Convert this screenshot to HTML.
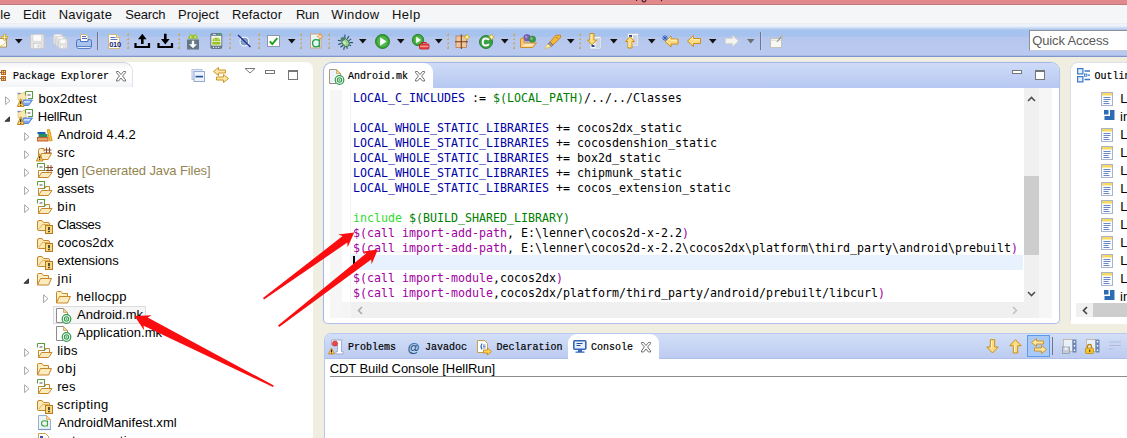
<!DOCTYPE html>
<html><head><meta charset="utf-8"><title>Eclipse</title>
<style>
*{box-sizing:border-box;margin:0;padding:0}
html,body{width:1127px;height:438px;overflow:hidden;background:#f0ede1;}
body{position:relative;font-family:"Liberation Sans",sans-serif;font-size:13px;color:#000;}
.abs{position:absolute}
svg{overflow:visible}
#title{left:0;top:0;width:1127px;height:4px;background:#e2898c}
#titleline{left:0;top:4px;width:1127px;height:1px;background:#c07a7c}
#menu{left:0;top:5px;width:1127px;height:20px;background:#f5f6f7}
.m{top:7px;line-height:15px;white-space:nowrap;color:#111}
#tool{left:0;top:23px;width:1127px;height:33px;background:linear-gradient(#e9eaec 0px,#eef2fb 1px,#edf2fb 3px,#a6c2ee 7px,#a6c2ee 13px,#b6c7ee 14.5px,#bacaef 33px);}
#toolline{left:0;top:55px;width:1127px;height:2px;background:linear-gradient(#a9bae6 0,#a9bae6 50%,#7f95cc 50%,#7f95cc 100%)}
.ss{font-family:"Liberation Mono",monospace;font-size:10px;letter-spacing:0;white-space:nowrap;line-height:14px;color:#000;-webkit-text-stroke:0.18px #000}
.ui{white-space:nowrap;line-height:16px}
#pe{left:-10px;top:62px;width:323px;height:400px;background:#fff;border-radius:0 7px 0 0;}
#ed{left:323px;top:62px;width:737px;height:262px;background:#fff;border:1px solid #a4b8ea;border-right-color:#b2c2ea;border-bottom-color:#b2c2ea;border-radius:9px 9px 5px 5px;overflow:hidden;box-shadow:0 0 1px #c8d4f0}
#edhead{left:0;top:0;width:737px;height:25px;background:linear-gradient(#cfdbf7,#b6c8f1)}
#edtab{left:0;top:0;width:109px;height:26px;background:#fff;border-radius:8px 9px 0 0}
#ol{left:1070px;top:62px;width:80px;height:262px;background:#fff;border-radius:8px 0 0 6px;border:1px solid #dcdfe8;overflow:hidden}
#con{left:324px;top:333px;width:830px;height:120px;background:#fff;border-radius:7px 0 0 0;border-left:1px solid #b6c6ec;border-top:1px solid #b9c8ee;overflow:hidden}
#conhead{left:0;top:0;width:830px;height:25px;background:linear-gradient(#d3dff7,#bccbf0);border-bottom:1px solid #aebfe8}
#contab{left:243px;top:0;width:91px;height:26px;background:#fff;border-radius:9px 9px 0 0}
.tree{white-space:nowrap;line-height:18px;height:18px}
.code{white-space:pre;font-family:"DejaVu Sans Mono","Liberation Mono",monospace;font-size:11.63px;line-height:15px;height:15px;color:#000}
.k{color:#0000a8}.v{color:#008000}.g{color:#30dc30}.p{color:#a000a0}
</style></head><body>
<div id="title" class="abs"></div><div id="titleline" class="abs"></div>
<svg class="abs" style="left:630px;top:0px" width="40" height="4" viewBox="0 0 40 4" ><path d="M6.500 0v1M12 0 Q12.500 2.200 14.500 2 Q15.800 1.500 16 0" fill="none" stroke="#3a2030" stroke-width="1.200"/><path d="M31.500 0v1.200" stroke="#3a2030" stroke-width="1.200"/></svg>
<div id="menu" class="abs"></div>
<div id="m0" class="abs m" style="left:-10.5px;top:7px;">File</div>
<div id="m1" class="abs m" style="left:23.1px;top:7px;letter-spacing:0.018px;">Edit</div>
<div id="m2" class="abs m" style="left:58.69px;top:7px;letter-spacing:0.273px;">Navigate</div>
<div id="m3" class="abs m" style="left:125.37px;top:7px;letter-spacing:-0.227px;">Search</div>
<div id="m4" class="abs m" style="left:178.0px;top:7px;letter-spacing:0.049px;">Project</div>
<div id="m5" class="abs m" style="left:231.9px;top:7px;letter-spacing:0.142px;">Refactor</div>
<div id="m6" class="abs m" style="left:295.9px;top:7px;letter-spacing:-0.300px;">Run</div>
<div id="m7" class="abs m" style="left:331.32px;top:7px;letter-spacing:0.312px;">Window</div>
<div id="m8" class="abs m" style="left:391.9px;top:7px;letter-spacing:0.500px;">Help</div>
<div id="tool" class="abs"></div><div id="toolline" class="abs"></div>
<!--TOOLBAR ICONS-->
<svg class="abs" style="left:0px;top:33px" width="9" height="16" viewBox="0 0 9 16" ><path d="M-1 5.500 H6.500 V14 H-1" fill="#fff" stroke="#b09444" stroke-width="1"/><path d="M6 7.500 Q5.500 11.500 0 13.200" fill="none" stroke="#f2cc4c" stroke-width="1"/><path d="M4.600 0.800 V7.600 M1.200 4.200 H8" stroke="#c8961c" stroke-width="2.400"/><path d="M4.600 1.300 V7.100 M1.700 4.200 H7.500" stroke="#fff8c8" stroke-width="0.900"/></svg>
<svg class="abs" style="left:14.8px;top:39px" width="8" height="5" viewBox="0 0 8 5" ><path d="M0 0 H7.500 L3.750 4.500 Z" fill="#111"/></svg>
<svg class="abs" style="left:30px;top:34px" width="15" height="15" viewBox="0 0 15 15" ><path d="M0.500 0.500 H14 V14.500 H0.500 Z" fill="#e4e4e4" stroke="#c9c9c9"/><rect x="3" y="0.800" width="8.500" height="6.400" fill="#fbfbfb" stroke="#d2d2d2" stroke-width="0.600"/><rect x="3.500" y="9.300" width="7.500" height="5" fill="#f6f6f6" stroke="#c8c8c8" stroke-width="0.700"/><rect x="7.500" y="10.800" width="2" height="2.800" fill="#d6d6d6"/></svg>
<svg class="abs" style="left:53px;top:34px" width="15" height="15" viewBox="0 0 15 15" ><g transform="scale(0.68)"><path d="M0.500 0.500 H14 V14.500 H0.500 Z" fill="#e4e4e4" stroke="#c9c9c9"/><rect x="3" y="0.800" width="8.500" height="6.400" fill="#fbfbfb" stroke="#d2d2d2" stroke-width="0.600"/><rect x="3.500" y="9.300" width="7.500" height="5" fill="#f6f6f6" stroke="#c8c8c8" stroke-width="0.700"/><rect x="7.500" y="10.800" width="2" height="2.800" fill="#d6d6d6"/></g><g transform="translate(2.500,2.300) scale(0.68)"><path d="M0.500 0.500 H14 V14.500 H0.500 Z" fill="#e4e4e4" stroke="#c9c9c9"/><rect x="3" y="0.800" width="8.500" height="6.400" fill="#fbfbfb" stroke="#d2d2d2" stroke-width="0.600"/><rect x="3.500" y="9.300" width="7.500" height="5" fill="#f6f6f6" stroke="#c8c8c8" stroke-width="0.700"/><rect x="7.500" y="10.800" width="2" height="2.800" fill="#d6d6d6"/></g><g transform="translate(5,4.600) scale(0.68)"><path d="M0.500 0.500 H14 V14.500 H0.500 Z" fill="#e4e4e4" stroke="#c9c9c9"/><rect x="3" y="0.800" width="8.500" height="6.400" fill="#fbfbfb" stroke="#d2d2d2" stroke-width="0.600"/><rect x="3.500" y="9.300" width="7.500" height="5" fill="#f6f6f6" stroke="#c8c8c8" stroke-width="0.700"/><rect x="7.500" y="10.800" width="2" height="2.800" fill="#d6d6d6"/></g></svg>
<svg class="abs" style="left:75.5px;top:33.5px" width="16" height="16" viewBox="0 0 16 16" ><path d="M4.500 7 V0.500 H10 L12 2.500 V7" fill="#fff" stroke="#c8b070" stroke-width="0.900"/><path d="M6 2.500h4M6 4.500h5" stroke="#4a6ab0" stroke-width="1"/><path d="M0.500 7.500 Q0.500 5.500 2.500 5.500 H4.500 V7.500 H12 V5.500 H13.500 Q15.500 5.500 15.500 7.500 V12.500 H0.500 Z" fill="#a8c4ee" stroke="#4a74c4"/><path d="M1 12.500 H15 V13.500 Q15 14.500 13 14.500 H3 Q1 14.500 1 13.500Z" fill="#e4ecfa" stroke="#5a80c8"/></svg>
<svg class="abs" style="left:97px;top:32px" width="2" height="18" viewBox="0 0 2 18" ><rect x="0" y="0" width="1" height="18" fill="#6f768e"/><rect x="1" y="0" width="1" height="18" fill="#c6d3f2" opacity="0.6"/></svg>
<svg class="abs" style="left:107.5px;top:33.5px" width="14" height="16" viewBox="0 0 14 16" ><path d="M0.500 0.500 H8.500 L11.500 3.500 V14.500 H0.500 Z" fill="#fff" stroke="#d2b878"/><path d="M8.500 0.500 V3.500 H11.500" fill="#f4e2b0" stroke="#d2b878"/><path d="M2.500 3.500h5M2.500 5.500h7" stroke="#5a78c0" stroke-width="1"/><text x="1.200" y="13.200" font-family="Liberation Sans,sans-serif" font-weight="bold" font-size="7.500" fill="#1a2a7a" letter-spacing="-0.300">010</text></svg>
<svg class="abs" style="left:127px;top:33px" width="3" height="18" viewBox="0 0 3 18" ><rect x="0" y="0.3" width="2" height="2.6" fill="#bba985"/><rect x="0" y="0.3" width="1" height="1" fill="#d8ccb0"/><rect x="0" y="5" width="2" height="2.1" fill="#bba985"/><rect x="0" y="5" width="1" height="1" fill="#d8ccb0"/><rect x="0" y="9.2" width="2" height="2.1" fill="#bba985"/><rect x="0" y="9.2" width="1" height="1" fill="#d8ccb0"/><rect x="0" y="13.4" width="2" height="2.6" fill="#bba985"/><rect x="0" y="13.4" width="1" height="1" fill="#d8ccb0"/></svg>
<svg class="abs" style="left:133.5px;top:33px" width="17" height="16" viewBox="0 0 17 16" ><path d="M1.500 10 V14 H15 V10" fill="none" stroke="#000" stroke-width="2.200"/><path d="M8.300 0.800 L4 6.300 H7 V11 H9.600 V6.300 H12.600 Z" fill="#000"/></svg>
<svg class="abs" style="left:156.8px;top:33px" width="17" height="16" viewBox="0 0 17 16" ><path d="M1.500 10 V14 H15 V10" fill="none" stroke="#000" stroke-width="2.200"/><path d="M8.300 11.400 L4 5.900 H7 V0.800 H9.600 V5.900 H12.600 Z" fill="#000"/></svg>
<svg class="abs" style="left:178px;top:33px" width="3" height="18" viewBox="0 0 3 18" ><rect x="0" y="0.3" width="2" height="2.6" fill="#bba985"/><rect x="0" y="0.3" width="1" height="1" fill="#d8ccb0"/><rect x="0" y="5" width="2" height="2.1" fill="#bba985"/><rect x="0" y="5" width="1" height="1" fill="#d8ccb0"/><rect x="0" y="9.2" width="2" height="2.1" fill="#bba985"/><rect x="0" y="9.2" width="1" height="1" fill="#d8ccb0"/><rect x="0" y="13.4" width="2" height="2.6" fill="#bba985"/><rect x="0" y="13.4" width="1" height="1" fill="#d8ccb0"/></svg>
<svg class="abs" style="left:187px;top:32.5px" width="12" height="17" viewBox="0 0 12 17" ><path d="M1 5.800 Q1 1.800 6 1.800 Q11 1.800 11 5.800 Z" fill="#9ac326"/><path d="M2.500 0.300 L3.800 2.300 M9.500 0.300 L8.200 2.300" stroke="#9ac326" stroke-width="0.900"/><circle cx="3.800" cy="4" r="0.700" fill="#fff"/><circle cx="8.200" cy="4" r="0.700" fill="#fff"/><rect x="0" y="6.500" width="12" height="10" fill="#657684"/><path d="M6 15.300 L2 11.300 H4.800 V7.800 H7.200 V11.300 H10 Z" fill="#fff"/></svg>
<svg class="abs" style="left:209.5px;top:33px" width="13" height="16" viewBox="0 0 13 16" ><rect x="0.300" y="0" width="12" height="16" rx="2" fill="#66788a"/><rect x="1.300" y="2.800" width="10" height="9.800" fill="#f1f5e4"/><path d="M2.300 8.300 Q2.300 4.800 6.300 4.800 Q10.300 4.800 10.300 8.300 Z" fill="#9ac326"/><rect x="2.300" y="9" width="8" height="2.600" fill="#9ac326"/><circle cx="4.600" cy="6.800" r="0.600" fill="#fff"/><circle cx="8" cy="6.800" r="0.600" fill="#fff"/><path d="M2.800 1.400h3" stroke="#e8eef4" stroke-width="0.900"/><circle cx="8.500" cy="1.400" r="0.700" fill="#3ad43a"/><circle cx="10.300" cy="1.400" r="0.700" fill="#3ad43a"/><path d="M3 14.400h1M5.500 14.400h1.200M8 14.400h1.200" stroke="#fff" stroke-width="1"/></svg>
<svg class="abs" style="left:229px;top:33px" width="3" height="18" viewBox="0 0 3 18" ><rect x="0" y="0.3" width="2" height="2.6" fill="#bba985"/><rect x="0" y="0.3" width="1" height="1" fill="#d8ccb0"/><rect x="0" y="5" width="2" height="2.1" fill="#bba985"/><rect x="0" y="5" width="1" height="1" fill="#d8ccb0"/><rect x="0" y="9.2" width="2" height="2.1" fill="#bba985"/><rect x="0" y="9.2" width="1" height="1" fill="#d8ccb0"/><rect x="0" y="13.4" width="2" height="2.6" fill="#bba985"/><rect x="0" y="13.4" width="1" height="1" fill="#d8ccb0"/></svg>
<svg class="abs" style="left:237px;top:34px" width="15" height="14" viewBox="0 0 15 14" ><circle cx="7.400" cy="7.600" r="4.800" fill="#fff"/><circle cx="7.400" cy="7.600" r="3.500" fill="#86a4c8" stroke="#6888b4" stroke-width="0.800"/><path d="M1 1 L13.500 13" stroke="#1a2a90" stroke-width="1.200"/></svg>
<svg class="abs" style="left:258px;top:33px" width="3" height="18" viewBox="0 0 3 18" ><rect x="0" y="0.3" width="2" height="2.6" fill="#bba985"/><rect x="0" y="0.3" width="1" height="1" fill="#d8ccb0"/><rect x="0" y="5" width="2" height="2.1" fill="#bba985"/><rect x="0" y="5" width="1" height="1" fill="#d8ccb0"/><rect x="0" y="9.2" width="2" height="2.1" fill="#bba985"/><rect x="0" y="9.2" width="1" height="1" fill="#d8ccb0"/><rect x="0" y="13.4" width="2" height="2.6" fill="#bba985"/><rect x="0" y="13.4" width="1" height="1" fill="#d8ccb0"/></svg>
<svg class="abs" style="left:266.5px;top:35px" width="13" height="12" viewBox="0 0 13 12" ><rect x="0.500" y="0.500" width="12" height="11" fill="#fff" stroke="#8e98ac"/><path d="M2.800 6.300 L5.300 9 L10.300 3.200" fill="none" stroke="#18a018" stroke-width="1.900"/></svg>
<svg class="abs" style="left:287.7px;top:39px" width="8" height="5" viewBox="0 0 8 5" ><path d="M0 0 H7.500 L3.750 4.500 Z" fill="#111"/></svg>
<svg class="abs" style="left:300px;top:33px" width="3" height="18" viewBox="0 0 3 18" ><rect x="0" y="0.3" width="2" height="2.6" fill="#bba985"/><rect x="0" y="0.3" width="1" height="1" fill="#d8ccb0"/><rect x="0" y="5" width="2" height="2.1" fill="#bba985"/><rect x="0" y="5" width="1" height="1" fill="#d8ccb0"/><rect x="0" y="9.2" width="2" height="2.1" fill="#bba985"/><rect x="0" y="9.2" width="1" height="1" fill="#d8ccb0"/><rect x="0" y="13.4" width="2" height="2.6" fill="#bba985"/><rect x="0" y="13.4" width="1" height="1" fill="#d8ccb0"/></svg>
<svg class="abs" style="left:310px;top:33px" width="14" height="16" viewBox="0 0 14 16" ><rect x="0.500" y="1" width="10.500" height="14" fill="#e4f6fa" stroke="#cca476"/><path d="M9.300 6.300 V14.200 M9.300 7.800 Q8 6.600 6 6.600 Q2.600 6.600 2.600 10.200 Q2.600 13.800 6 13.800 Q8 13.800 9.300 12.600" fill="none" stroke="#22a040" stroke-width="1.300"/><path d="M10 0 L11.200 2.300 L13.500 3.500 L11.200 4.700 L10 7 L8.800 4.700 L6.500 3.500 L8.800 2.300Z" fill="#f89030"/><path d="M10 2v3M8.500 3.500h3" stroke="#fff4d8" stroke-width="0.900"/></svg>
<svg class="abs" style="left:328px;top:33px" width="3" height="18" viewBox="0 0 3 18" ><rect x="0" y="0.3" width="2" height="2.6" fill="#bba985"/><rect x="0" y="0.3" width="1" height="1" fill="#d8ccb0"/><rect x="0" y="5" width="2" height="2.1" fill="#bba985"/><rect x="0" y="5" width="1" height="1" fill="#d8ccb0"/><rect x="0" y="9.2" width="2" height="2.1" fill="#bba985"/><rect x="0" y="9.2" width="1" height="1" fill="#d8ccb0"/><rect x="0" y="13.4" width="2" height="2.6" fill="#bba985"/><rect x="0" y="13.4" width="1" height="1" fill="#d8ccb0"/></svg>
<svg class="abs" style="left:336.5px;top:33.5px" width="16" height="16" viewBox="0 0 16 16" ><g transform="rotate(-38 8 8) translate(0.8,0.8) scale(0.9)"><path d="M3 1.500 L5.500 4.500 M13 1.500 L10.500 4.500 M0.500 5.500 L4 7 M15.500 5.500 L12 7 M0.500 9.500 H4 M15.500 9.500 H12 M1.500 14 L4.500 11.500 M14.500 14 L11.500 11.500 M6 13.500 L5.500 15.500 M10 13.500 L10.500 15.500" stroke="#1f4f58" stroke-width="1.200" fill="none"/><ellipse cx="8" cy="9" rx="3.600" ry="4.800" fill="#9fd08a" stroke="#2f6f5a" stroke-width="1"/><circle cx="8" cy="3.800" r="1.800" fill="#4f8f70" stroke="#2a5a50" stroke-width="0.600"/><ellipse cx="7" cy="8" rx="1.400" ry="2.300" fill="#d4eec8" opacity="0.800"/></g></svg>
<svg class="abs" style="left:359px;top:39px" width="8" height="5" viewBox="0 0 8 5" ><path d="M0 0 H7.500 L3.750 4.500 Z" fill="#111"/></svg>
<svg class="abs" style="left:374.5px;top:33.5px" width="15" height="15" viewBox="0 0 15 15" ><circle cx="7.500" cy="7.500" r="7" fill="#36a336" stroke="#1f7a1f" stroke-width="0.900"/><circle cx="7.500" cy="7.500" r="5.200" fill="#5fbf5a" opacity="0.7"/><path d="M5.200 3.200 L11.500 7.500 L5.200 11.800 Z" fill="#fff"/></svg>
<svg class="abs" style="left:396.7px;top:39px" width="8" height="5" viewBox="0 0 8 5" ><path d="M0 0 H7.500 L3.750 4.500 Z" fill="#111"/></svg>
<svg class="abs" style="left:411.5px;top:33.5px" width="18" height="16" viewBox="0 0 18 16" ><circle cx="6" cy="6" r="5.700" fill="#36a336" stroke="#1f7a1f" stroke-width="0.800"/><circle cx="6" cy="6" r="4" fill="#5fbf5a" opacity="0.7"/><path d="M4.200 2.700 L9 6 L4.200 9.300 Z" fill="#fff"/><path d="M10 9.500 V8.500 H14 V9.500" fill="none" stroke="#d02020" stroke-width="1.100"/><rect x="7.500" y="10" width="9.500" height="5" rx="1" fill="#e84a48" stroke="#c01818" stroke-width="0.800"/><path d="M8 12.300h8.500" stroke="#f8b0a8" stroke-width="0.900"/></svg>
<svg class="abs" style="left:434.8px;top:39px" width="8" height="5" viewBox="0 0 8 5" ><path d="M0 0 H7.500 L3.750 4.500 Z" fill="#111"/></svg>
<svg class="abs" style="left:447px;top:33px" width="3" height="18" viewBox="0 0 3 18" ><rect x="0" y="0.3" width="2" height="2.6" fill="#bba985"/><rect x="0" y="0.3" width="1" height="1" fill="#d8ccb0"/><rect x="0" y="5" width="2" height="2.1" fill="#bba985"/><rect x="0" y="5" width="1" height="1" fill="#d8ccb0"/><rect x="0" y="9.2" width="2" height="2.1" fill="#bba985"/><rect x="0" y="9.2" width="1" height="1" fill="#d8ccb0"/><rect x="0" y="13.4" width="2" height="2.6" fill="#bba985"/><rect x="0" y="13.4" width="1" height="1" fill="#d8ccb0"/></svg>
<svg class="abs" style="left:455px;top:33.5px" width="16" height="15" viewBox="0 0 16 15" ><rect x="1" y="2" width="10.500" height="11.500" fill="#ecc89c" stroke="#b87a50" stroke-width="0.800"/><path d="M6.300 0.500 V15 M0 7.700 H13" stroke="#7a3a1a" stroke-width="1.100"/><path d="M12 0 L13 2 L15 3 L13 4 L12 6 L11 4 L9 3 L11 2Z" fill="#f8d838" stroke="#c89a10" stroke-width="0.500"/><path d="M12 1.500v3M10.500 3h3" stroke="#fffad0" stroke-width="0.900"/></svg>
<svg class="abs" style="left:478.5px;top:34px" width="17" height="15" viewBox="0 0 17 15" ><circle cx="7" cy="8" r="6.500" fill="#3aa046" stroke="#1f7a2a" stroke-width="0.900"/><path d="M10 5.800 Q8.800 4.400 7 4.400 Q3.700 4.400 3.700 8 Q3.700 11.600 7 11.600 Q8.800 11.600 10 10.200" fill="none" stroke="#fff" stroke-width="2"/><path d="M12.500 0 L13.500 2 L15.500 3 L13.500 4 L12.500 6 L11.500 4 L9.500 3 L11.500 2Z" fill="#f8d838" stroke="#c89a10" stroke-width="0.500"/><path d="M12.500 1.500v3M11 3h3" stroke="#fffad0" stroke-width="0.900"/></svg>
<svg class="abs" style="left:500.6px;top:39px" width="8" height="5" viewBox="0 0 8 5" ><path d="M0 0 H7.500 L3.750 4.500 Z" fill="#111"/></svg>
<svg class="abs" style="left:513px;top:33px" width="3" height="18" viewBox="0 0 3 18" ><rect x="0" y="0.3" width="2" height="2.6" fill="#bba985"/><rect x="0" y="0.3" width="1" height="1" fill="#d8ccb0"/><rect x="0" y="5" width="2" height="2.1" fill="#bba985"/><rect x="0" y="5" width="1" height="1" fill="#d8ccb0"/><rect x="0" y="9.2" width="2" height="2.1" fill="#bba985"/><rect x="0" y="9.2" width="1" height="1" fill="#d8ccb0"/><rect x="0" y="13.4" width="2" height="2.6" fill="#bba985"/><rect x="0" y="13.4" width="1" height="1" fill="#d8ccb0"/></svg>
<svg class="abs" style="left:519.5px;top:33.5px" width="17" height="15" viewBox="0 0 17 15" ><circle cx="7" cy="3.800" r="3.300" fill="#7a62b8" stroke="#5a4498" stroke-width="0.600"/><circle cx="6.200" cy="3" r="1.300" fill="#b0a0e0" opacity="0.8"/><circle cx="12.300" cy="5.300" r="3.300" fill="#3f9a48" stroke="#2a7a34" stroke-width="0.600"/><circle cx="11.500" cy="4.500" r="1.300" fill="#90d090" opacity="0.800"/><path d="M0.500 13.500 V5 L3.500 3.500 L4.500 9 H16.500 L12.500 13.500 Z" fill="#f6c878" stroke="#d08a28" stroke-linejoin="round"/><path d="M1.500 12.500 L5 9.800 H14.500 L12 12.500Z" fill="#fbe8b8"/></svg>
<svg class="abs" style="left:543.5px;top:33.5px" width="18" height="15" viewBox="0 0 18 15" ><path d="M11.500 1.500 L16.500 1 L16.800 3.500 L9 11 L6 8 Z" fill="#f4b63a" stroke="#c88418" stroke-width="0.900" stroke-linejoin="round"/><path d="M6 8 L9 11 L6.800 12.800 L3.800 10 Z" fill="#9a9a9a" stroke="#6a6a6a" stroke-width="0.700"/><path d="M3.800 10 L6.800 12.800 L0.500 14.500 Z" fill="#fdf6c0" stroke="#e0b040" stroke-width="0.700"/><path d="M12.800 3.500 l0.800 0.800" stroke="#1a3a9a" stroke-width="1"/></svg>
<svg class="abs" style="left:566.7px;top:39px" width="8" height="5" viewBox="0 0 8 5" ><path d="M0 0 H7.500 L3.750 4.500 Z" fill="#111"/></svg>
<svg class="abs" style="left:579px;top:33px" width="3" height="18" viewBox="0 0 3 18" ><rect x="0" y="0.3" width="2" height="2.6" fill="#bba985"/><rect x="0" y="0.3" width="1" height="1" fill="#d8ccb0"/><rect x="0" y="5" width="2" height="2.1" fill="#bba985"/><rect x="0" y="5" width="1" height="1" fill="#d8ccb0"/><rect x="0" y="9.2" width="2" height="2.1" fill="#bba985"/><rect x="0" y="9.2" width="1" height="1" fill="#d8ccb0"/><rect x="0" y="13.4" width="2" height="2.6" fill="#bba985"/><rect x="0" y="13.4" width="1" height="1" fill="#d8ccb0"/></svg>
<svg class="abs" style="left:586.5px;top:33px" width="15" height="16" viewBox="0 0 15 16" ><rect x="3" y="3.5" width="11" height="12.500" fill="#f6f8fc" stroke="#b8c4da" stroke-width="0.800"/><path d="M8.5 6.0h4.500M8.5 8.0h4.500M8.5 10.0h4.500M8.5 12.0h4.500M8.5 14.0h4.500" stroke="#9aa8c6" stroke-width="0.900"/><rect x="4.500" y="12" width="3" height="2" fill="#2a4a98"/><path d="M5 12 L0.500 7 H3 V0.500 H7 V7 H9.500 Z" fill="#fcdc80" stroke="#cc8e18" stroke-linejoin="round"/><path d="M4 1.500v6" stroke="#fff4cc" stroke-width="1"/></svg>
<svg class="abs" style="left:610px;top:39px" width="8" height="5" viewBox="0 0 8 5" ><path d="M0 0 H7.500 L3.750 4.500 Z" fill="#111"/></svg>
<svg class="abs" style="left:624.5px;top:33px" width="15" height="16" viewBox="0 0 15 16" ><rect x="2.5" y="0.5" width="11" height="12.500" fill="#f6f8fc" stroke="#b8c4da" stroke-width="0.800"/><path d="M8.0 3.0h4.500M8.0 5.0h4.500M8.0 7.0h4.500M8.0 9.0h4.500M8.0 11.0h4.500" stroke="#9aa8c6" stroke-width="0.900"/><rect x="4" y="2" width="3" height="2" fill="#2a4a98"/><path d="M5 3.500 L0.500 8.500 H3 V15 H7 V8.500 H9.500 Z" fill="#fcdc80" stroke="#cc8e18" stroke-linejoin="round"/><path d="M4 8.500v5.500" stroke="#fff4cc" stroke-width="1"/></svg>
<svg class="abs" style="left:647.9px;top:39px" width="8" height="5" viewBox="0 0 8 5" ><path d="M0 0 H7.500 L3.750 4.500 Z" fill="#111"/></svg>
<svg class="abs" style="left:662px;top:34.5px" width="17" height="13" viewBox="0 0 17 13" ><g transform="translate(2.500,0.500)"><path d="M0.500 6 L6.500 0.500 V3.500 H13.500 V8.500 H6.500 V11.500 Z" fill="#fcdc80" stroke="#cc8e18" stroke-width="1" stroke-linejoin="round"/><path d="M3 5 L6.500 2 M6.500 4.700 H12.500" stroke="#fff6d4" stroke-width="1" opacity="0.9"/></g><path d="M3 0 V6 M0 3 H6 M0.800 0.800 L5.200 5.200 M5.200 0.800 L0.800 5.200" stroke="#2a5ab8" stroke-width="0.900"/></svg>
<svg class="abs" style="left:686.8px;top:35px" width="15" height="13" viewBox="0 0 15 13" ><path d="M0.500 6 L6.500 0.500 V3.500 H13.500 V8.500 H6.500 V11.500 Z" fill="#fcdc80" stroke="#cc8e18" stroke-width="1" stroke-linejoin="round"/><path d="M3 5 L6.500 2 M6.500 4.700 H12.500" stroke="#fff6d4" stroke-width="1" opacity="0.9"/></svg>
<svg class="abs" style="left:709px;top:39px" width="8" height="5" viewBox="0 0 8 5" ><path d="M0 0 H7.500 L3.750 4.500 Z" fill="#111"/></svg>
<svg class="abs" style="left:725px;top:35px" width="15" height="13" viewBox="0 0 15 13" ><path d="M13.500 6 L7.500 0.500 V3.500 H0.500 V8.500 H7.500 V11.500 Z" fill="#f4f4ee" stroke="#d6d6cc" stroke-width="1" stroke-linejoin="round"/></svg>
<svg class="abs" style="left:746.7px;top:39px" width="8" height="5" viewBox="0 0 8 5" ><path d="M0 0 H7.500 L3.750 4.500 Z" fill="#6e6e6e"/></svg>
<svg class="abs" style="left:760px;top:32px" width="2" height="18" viewBox="0 0 2 18" ><rect x="0" y="0" width="1" height="18" fill="#6f768e"/><rect x="1" y="0" width="1" height="18" fill="#c6d3f2" opacity="0.6"/></svg>
<svg class="abs" style="left:770px;top:34.5px" width="14" height="13" viewBox="0 0 14 13" ><rect x="0.500" y="3.500" width="11" height="9" fill="#f7f7f5" stroke="#c2c2ba"/><path d="M1 5.300h10" stroke="#dcdcd6"/><path d="M12.300 1 L8.500 5 M7 7 L8.500 5" stroke="#8c9a80" stroke-width="1.100"/><circle cx="12" cy="1.800" r="1.300" fill="#b4c0a8"/></svg>
<div class="abs" style="left:1029px;top:30px;width:110px;height:21px;background:#fff;border:1px solid #8d8f96;border-bottom-color:#c8ccd8"></div>
<div id="qa" class="abs ui" style="left:1032.18px;top:32.5px;letter-spacing:-0.125px;color:#5a5a5a">Quick Access</div>
<div id="pe" class="abs"></div>
<div class="abs" id="petab" style="left:-10px;top:62px;width:143px;height:25px;border-radius:0 9px 0 0;border-top:1px solid #cdd3e6;border-right:1px solid #dfe2ec;background:linear-gradient(#f4f4f7 0,#fff 25%,#fff 60%,#f2f3f6)"></div>
<svg class="abs" style="left:0px;top:70px" width="7" height="11" viewBox="0 0 7 11" ><g fill="#f8d878" stroke="#b5651d" stroke-width="1"><rect x="1.500" y="0.500" width="4" height="4"/><rect x="1.500" y="6.500" width="4" height="4"/></g><path d="M3.500 0.500v4M1.500 2.500h4M3.500 6.500v4M1.500 8.500h4" stroke="#b5651d" stroke-width="0.900" fill="none"/><path d="M0 2.500h1M0 8.500h1" stroke="#5a78b8" stroke-width="1"/></svg>
<div id="petxt" class="abs ss" style="left:13px;top:70px;">Package Explorer</div>
<svg class="abs" style="left:115px;top:71px" width="12" height="11" viewBox="0 0 12 11" ><path d="M1.500 0.500h2l2.500 3 2.500-3h2v1.200L7.600 5l2.900 3.800v1.200h-2L6 7 3.500 10h-2V8.800L4.400 5 1.500 1.700z" fill="#fff" stroke="#6e6e6e" stroke-width="1" stroke-linejoin="round"/></svg>
<svg class="abs" style="left:191px;top:68px" width="15" height="15" viewBox="0 0 15 15" ><rect x="1" y="1.500" width="10" height="10" fill="#dfe8f8" stroke="#b4c3e0"/><rect x="3" y="3.500" width="10.500" height="10" fill="#edf3fc" stroke="#98abd0"/><rect x="4.500" y="7.800" width="7.500" height="1.600" fill="#1d4f9c"/></svg>
<svg class="abs" style="left:212px;top:66px" width="18" height="18" viewBox="0 0 18 18" ><g fill="#fde7a4" stroke="#cf9424" stroke-width="1" stroke-linejoin="round"><path d="M1.500 5.500 L6.500 1.500 V4 H13.500 V7 H6.500 V9.500 Z"/><path d="M16.500 12.500 L11.500 8.500 V11 H4.500 V14 H11.500 V16.500 Z"/></g></svg>
<svg class="abs" style="left:244px;top:67px" width="12" height="7" viewBox="0 0 12 7" ><path d="M1 1.500 H11 L6 6 Z" fill="#fff" stroke="#7a7a7a" stroke-width="1"/></svg>
<div class="abs" style="left:265px;top:70px;width:10px;height:4px;border:1px solid #767676;background:#fff"></div>
<div class="abs" style="left:288px;top:70px;width:10px;height:10px;border:1px solid #767676;border-top-width:2px;background:#fff"></div>
<!--TREE-->
<div class="abs" style="left:53px;top:306px;width:93px;height:18px;background:#f6f6f6;border:1px solid #dcdcdc"></div>
<svg class="abs" style="left:5px;top:96px" width="7" height="10" viewBox="0 0 7 10" ><path d="M0.600 0.800 L5 4.700 L0.600 8.600 Z" fill="#fff" stroke="#a6a6a6" stroke-width="1"/></svg>
<svg class="abs" style="left:17px;top:91px" width="16" height="16" viewBox="0 0 16 16" ><path d="M1 3.500 L2.500 2.500 H5 L6.500 1.500 H9 V9 H1 Z" fill="#fbeab0" stroke="#d4bc78" stroke-width="0.700"/><path d="M0.500 2.500h3" stroke="#7a86c0" stroke-width="1.400"/><path d="M8.5 0.5 H15.5 V7.5 H11" fill="#fff" stroke="#5c9c3c" stroke-width="1.100"/><path d="M8.5 0.5 V4.5" stroke="#5c9c3c" stroke-width="1.100" fill="none"/><path d="M10.5 4 H13.5" stroke="#555" stroke-width="1"/><path d="M6.500 9 H15.500 L11.500 14.500 H4.500 Z" fill="#7ea8ee" stroke="#5584da" stroke-width="1" stroke-linejoin="round"/><path d="M7.500 10 H13.500 L12.300 11.700 H6.300Z" fill="#cfe0fb"/><path d="M3.700 7.800 L0.400 15.500 H7 Z" fill="#fbd66a" stroke="#c58a22" stroke-width="1" stroke-linejoin="round"/><path d="M3.700 10.300v2.800M3.700 13.800v1" stroke="#222" stroke-width="1.200"/></svg>
<div id="t0" class="abs tree" style="left:38.51px;top:89.5px;letter-spacing:0.202px;">box2dtest</div>
<svg class="abs" style="left:4px;top:115.5px" width="7" height="7" viewBox="0 0 7 7" ><path d="M5.500 0.800 L5.500 5.300 L1 5.300 Z" fill="#484848" stroke="#2c2c2c" stroke-width="0.900" stroke-linejoin="round"/></svg>
<svg class="abs" style="left:17px;top:109px" width="16" height="16" viewBox="0 0 16 16" ><path d="M1 3.500 L2.500 2.500 H5 L6.500 1.500 H9 V9 H1 Z" fill="#fbeab0" stroke="#d4bc78" stroke-width="0.700"/><path d="M0.500 2.500h3" stroke="#7a86c0" stroke-width="1.400"/><path d="M8.5 0.5 H15.5 V7.5 H11" fill="#fff" stroke="#5c9c3c" stroke-width="1.100"/><path d="M8.5 0.5 V4.5" stroke="#5c9c3c" stroke-width="1.100" fill="none"/><path d="M10.5 4 H13.5" stroke="#555" stroke-width="1"/><path d="M6.500 9 H15.500 L11.500 14.500 H4.500 Z" fill="#7ea8ee" stroke="#5584da" stroke-width="1" stroke-linejoin="round"/><path d="M7.500 10 H13.500 L12.300 11.700 H6.300Z" fill="#cfe0fb"/><path d="M3.700 7.800 L0.400 15.500 H7 Z" fill="#fbd66a" stroke="#c58a22" stroke-width="1" stroke-linejoin="round"/><path d="M3.700 10.300v2.800M3.700 13.800v1" stroke="#222" stroke-width="1.200"/></svg>
<div id="t1" class="abs tree" style="left:37.8px;top:107.5px;letter-spacing:-0.300px;">HellRun</div>
<svg class="abs" style="left:24px;top:132px" width="7" height="10" viewBox="0 0 7 10" ><path d="M0.600 0.800 L5 4.700 L0.600 8.600 Z" fill="#fff" stroke="#a6a6a6" stroke-width="1"/></svg>
<svg class="abs" style="left:37px;top:129px" width="16" height="16" viewBox="0 0 16 16" ><rect x="0.5" y="3" width="8" height="2" fill="#1a62b4"/><rect x="1.500" y="5" width="9" height="3" fill="#2f8c5c"/><rect x="0.500" y="8.500" width="10.500" height="3.500" fill="#e6a56c" stroke="#c2602a" stroke-width="1"/><path d="M10.200 0.800 L12.500 0.500 L15.200 11.500 L12.800 12 Z" fill="#fbc63a" stroke="#d29412" stroke-width="0.900" stroke-linejoin="round"/></svg>
<div id="t2" class="abs tree" style="left:57.58px;top:125.5px;letter-spacing:0.072px;">Android 4.4.2</div>
<svg class="abs" style="left:24px;top:150px" width="7" height="10" viewBox="0 0 7 10" ><path d="M0.600 0.800 L5 4.700 L0.600 8.600 Z" fill="#fff" stroke="#a6a6a6" stroke-width="1"/></svg>
<svg class="abs" style="left:36px;top:147px" width="16" height="16" viewBox="0 0 16 16" ><path d="M2.500 9 V3.500 Q2.500 1.500 4.500 1.500 H8 V4.500" fill="#fdf3d0" stroke="#c8862a"/><path d="M10.5 0.5v6.500M13.5 0.5v6.500M8 3.0h7.500M8 6.0h7.500" stroke="#8a4a2a" stroke-width="1" fill="none"/><path d="M5.500 6.500 H15.500 L12 12.500 H4 Z" fill="#fcebbc" stroke="#c8862a" stroke-linejoin="round"/><path d="M3.700 6.800 L0.400 14 H7 Z" fill="#fbd66a" stroke="#c58a22" stroke-width="1" stroke-linejoin="round"/><path d="M3.700 9.200v2.400M3.700 12.200v0.900" stroke="#222" stroke-width="1.200"/></svg>
<div id="t3" class="abs tree" style="left:56.92px;top:143.5px;letter-spacing:0.300px;">src</div>
<svg class="abs" style="left:24px;top:168px" width="7" height="10" viewBox="0 0 7 10" ><path d="M0.600 0.800 L5 4.700 L0.600 8.600 Z" fill="#fff" stroke="#a6a6a6" stroke-width="1"/></svg>
<svg class="abs" style="left:36.5px;top:163px" width="16" height="16" viewBox="0 0 16 16" ><path d="M0.5 0.5 H7.5 V7.5 H3" fill="#fff" stroke="#5c9c3c" stroke-width="1.100"/><path d="M0.5 0.5 V4.5" stroke="#5c9c3c" stroke-width="1.100" fill="none"/><path d="M2.5 4 H5.5" stroke="#555" stroke-width="1"/><path d="M11.0 2v6.500M14.0 2v6.500M8.5 4.5h7.500M8.5 7.5h7.500" stroke="#8a4a2a" stroke-width="1" fill="none"/><path d="M1.5 14.500 V7.500 H5.500" fill="none" stroke="#c8862a"/><path d="M1.500 14.500 L4.500 9.500 H15 L11.500 14.500 Z" fill="#fcebbc" stroke="#c8862a" stroke-width="1" stroke-linejoin="round"/></svg>
<div id="t4" class="abs tree" style="left:56.96px;top:161.5px;letter-spacing:-0.100px;">gen <span style="color:#94844f">[Generated Java Files]</span></div>
<svg class="abs" style="left:24px;top:186px" width="7" height="10" viewBox="0 0 7 10" ><path d="M0.600 0.800 L5 4.700 L0.600 8.600 Z" fill="#fff" stroke="#a6a6a6" stroke-width="1"/></svg>
<svg class="abs" style="left:36.5px;top:181px" width="16" height="16" viewBox="0 0 16 16" ><path d="M0.5 0.5 H7.5 V7.5 H3" fill="#fff" stroke="#5c9c3c" stroke-width="1.100"/><path d="M0.5 0.5 V4.5" stroke="#5c9c3c" stroke-width="1.100" fill="none"/><path d="M2.5 4 H5.5" stroke="#555" stroke-width="1"/><path d="M8.500 7 V5.500 H12.500 V9" fill="none" stroke="#c8862a"/><path d="M1.5 14.500 V7.500 H5.500" fill="none" stroke="#c8862a"/><path d="M1.500 14.500 L4.500 9.500 H15 L11.500 14.500 Z" fill="#fcebbc" stroke="#c8862a" stroke-width="1" stroke-linejoin="round"/></svg>
<div id="t5" class="abs tree" style="left:57.03px;top:179.5px;letter-spacing:-0.063px;">assets</div>
<svg class="abs" style="left:24px;top:204px" width="7" height="10" viewBox="0 0 7 10" ><path d="M0.600 0.800 L5 4.700 L0.600 8.600 Z" fill="#fff" stroke="#a6a6a6" stroke-width="1"/></svg>
<svg class="abs" style="left:36.5px;top:199px" width="16" height="16" viewBox="0 0 16 16" ><path d="M0.5 0.5 H7.5 V7.5 H3" fill="#fff" stroke="#5c9c3c" stroke-width="1.100"/><path d="M0.5 0.5 V4.5" stroke="#5c9c3c" stroke-width="1.100" fill="none"/><path d="M2.5 4 H5.5" stroke="#555" stroke-width="1"/><path d="M8.500 7 V5.500 H12.500 V9" fill="none" stroke="#c8862a"/><path d="M1.5 14.500 V7.500 H5.500" fill="none" stroke="#c8862a"/><path d="M1.500 14.500 L4.500 9.500 H15 L11.500 14.500 Z" fill="#fcebbc" stroke="#c8862a" stroke-width="1" stroke-linejoin="round"/></svg>
<div id="t6" class="abs tree" style="left:57.32px;top:197.5px;letter-spacing:0.500px;">bin</div>
<svg class="abs" style="left:36.5px;top:218.5px" width="16" height="16" viewBox="0 0 16 16" ><path d="M0.500 10.500 V3 Q0.500 1.500 2 1.500 H5 L6.500 3.500 H11 Q12.500 3.500 12.500 5 V10.500 Q12.500 11.500 11.500 11.500 H1.500 Q0.500 11.500 0.500 10.500Z" fill="#fbe9b4" stroke="#c8862a"/><path d="M1.500 10.500 L5.500 5.500 H11.500" fill="none" stroke="#d9a040" stroke-width="0.800"/><rect x="8.500" y="6.500" width="7" height="8" fill="#fbd978" stroke="#b87a22"/><path d="M12 8v3.200M12 12v1.300" stroke="#222" stroke-width="1.500"/></svg>
<div id="t7" class="abs tree" style="left:57.35px;top:215.5px;letter-spacing:-0.449px;">Classes</div>
<svg class="abs" style="left:36.5px;top:236.5px" width="16" height="16" viewBox="0 0 16 16" ><path d="M0.500 10.500 V3 Q0.500 1.500 2 1.500 H5 L6.500 3.500 H11 Q12.500 3.500 12.500 5 V10.500 Q12.500 11.500 11.500 11.500 H1.500 Q0.500 11.500 0.500 10.500Z" fill="#fbe9b4" stroke="#c8862a"/><path d="M1.500 10.500 L5.500 5.500 H11.500" fill="none" stroke="#d9a040" stroke-width="0.800"/><rect x="8.500" y="6.500" width="7" height="8" fill="#fbd978" stroke="#b87a22"/><path d="M12 8v3.200M12 12v1.300" stroke="#222" stroke-width="1.500"/></svg>
<div id="t8" class="abs tree" style="left:57.46px;top:233.5px;letter-spacing:0.186px;">cocos2dx</div>
<svg class="abs" style="left:36.5px;top:254.5px" width="16" height="16" viewBox="0 0 16 16" ><path d="M0.500 10.500 V3 Q0.500 1.500 2 1.500 H5 L6.500 3.500 H11 Q12.500 3.500 12.500 5 V10.500 Q12.500 11.500 11.500 11.500 H1.500 Q0.500 11.500 0.500 10.500Z" fill="#fbe9b4" stroke="#c8862a"/><path d="M1.500 10.500 L5.500 5.500 H11.500" fill="none" stroke="#d9a040" stroke-width="0.800"/><rect x="8.500" y="6.500" width="7" height="8" fill="#fbd978" stroke="#b87a22"/><path d="M12 8v3.200M12 12v1.300" stroke="#222" stroke-width="1.500"/></svg>
<div id="t9" class="abs tree" style="left:57.21px;top:251.5px;letter-spacing:-0.076px;">extensions</div>
<svg class="abs" style="left:23px;top:277.5px" width="7" height="7" viewBox="0 0 7 7" ><path d="M5.500 0.800 L5.500 5.300 L1 5.300 Z" fill="#484848" stroke="#2c2c2c" stroke-width="0.900" stroke-linejoin="round"/></svg>
<svg class="abs" style="left:36px;top:271px" width="16" height="16" viewBox="0 0 16 16" ><path d="M1.500 14 V3.500 Q1.500 2.500 2.500 2.500 H6 L7.500 4.500 H12.500 V7.500" fill="#fdf0c0" stroke="#c8862a" stroke-linejoin="round"/><path d="M1.500 14 L4.500 7.500 H15.500 L12.500 14 Z" fill="#fcebbc" stroke="#c8862a" stroke-linejoin="round"/></svg>
<div id="t10" class="abs tree" style="left:57.56px;top:269.5px;letter-spacing:0.500px;">jni</div>
<svg class="abs" style="left:43px;top:294px" width="7" height="10" viewBox="0 0 7 10" ><path d="M0.600 0.800 L5 4.700 L0.600 8.600 Z" fill="#fff" stroke="#a6a6a6" stroke-width="1"/></svg>
<svg class="abs" style="left:55px;top:289px" width="16" height="16" viewBox="0 0 16 16" ><path d="M1.500 14 V3.500 Q1.500 2.500 2.500 2.500 H6 L7.500 4.500 H12.500 V7.500" fill="#fdf0c0" stroke="#c8862a" stroke-linejoin="round"/><path d="M1.500 14 L4.500 7.500 H15.500 L12.500 14 Z" fill="#fcebbc" stroke="#c8862a" stroke-linejoin="round"/></svg>
<div id="t11" class="abs tree" style="left:76.35px;top:287.5px;letter-spacing:0.258px;">hellocpp</div>
<svg class="abs" style="left:56px;top:308px" width="16" height="16" viewBox="0 0 16 16" ><path d="M0.500 14.500 V0.500 H7.500 L11.500 4.500 V8" fill="#fff" stroke="#8c8c8c"/><path d="M0.500 14.500 H7" stroke="#8c8c8c" fill="none"/><path d="M7.500 0.500 V4.500 H11.500 Z" fill="#f0d8a0" stroke="#c8a050" stroke-width="0.800"/><circle cx="10.500" cy="11" r="4.300" fill="#fff" stroke="#2f9a4a" stroke-width="1.200"/><circle cx="10.500" cy="11" r="2.200" fill="#d8f0dc" stroke="#2f9a4a" stroke-width="1.100"/><circle cx="10.500" cy="11" r="0.800" fill="#2f9a4a"/></svg>
<div id="t12" class="abs tree" style="left:77.03px;top:305.5px;letter-spacing:0.040px;">Android.mk</div>
<svg class="abs" style="left:56px;top:326px" width="16" height="16" viewBox="0 0 16 16" ><path d="M0.500 14.500 V0.500 H7.500 L11.500 4.500 V8" fill="#fff" stroke="#8c8c8c"/><path d="M0.500 14.500 H7" stroke="#8c8c8c" fill="none"/><path d="M7.500 0.500 V4.500 H11.500 Z" fill="#f0d8a0" stroke="#c8a050" stroke-width="0.800"/><circle cx="10.500" cy="11" r="4.300" fill="#fff" stroke="#2f9a4a" stroke-width="1.200"/><circle cx="10.500" cy="11" r="2.200" fill="#d8f0dc" stroke="#2f9a4a" stroke-width="1.100"/><circle cx="10.500" cy="11" r="0.800" fill="#2f9a4a"/></svg>
<div id="t13" class="abs tree" style="left:77.03px;top:323.5px;letter-spacing:0.040px;">Application.mk</div>
<svg class="abs" style="left:24px;top:348px" width="7" height="10" viewBox="0 0 7 10" ><path d="M0.600 0.800 L5 4.700 L0.600 8.600 Z" fill="#fff" stroke="#a6a6a6" stroke-width="1"/></svg>
<svg class="abs" style="left:36.5px;top:343px" width="16" height="16" viewBox="0 0 16 16" ><path d="M0.5 0.5 H7.5 V7.5 H3" fill="#fff" stroke="#5c9c3c" stroke-width="1.100"/><path d="M0.5 0.5 V4.5" stroke="#5c9c3c" stroke-width="1.100" fill="none"/><path d="M2.5 4 H5.5" stroke="#555" stroke-width="1"/><path d="M8.500 7 V5.500 H12.500 V9" fill="none" stroke="#c8862a"/><path d="M1.5 14.500 V7.500 H5.500" fill="none" stroke="#c8862a"/><path d="M1.500 14.500 L4.500 9.500 H15 L11.500 14.500 Z" fill="#fcebbc" stroke="#c8862a" stroke-width="1" stroke-linejoin="round"/></svg>
<div id="t14" class="abs tree" style="left:57.18px;top:341.5px;letter-spacing:0.314px;">libs</div>
<svg class="abs" style="left:24px;top:366px" width="7" height="10" viewBox="0 0 7 10" ><path d="M0.600 0.800 L5 4.700 L0.600 8.600 Z" fill="#fff" stroke="#a6a6a6" stroke-width="1"/></svg>
<svg class="abs" style="left:36px;top:361px" width="16" height="16" viewBox="0 0 16 16" ><path d="M1.500 14 V3.500 Q1.500 2.500 2.500 2.500 H6 L7.500 4.500 H12.500 V7.500" fill="#fdf0c0" stroke="#c8862a" stroke-linejoin="round"/><path d="M1.500 14 L4.500 7.500 H15.500 L12.500 14 Z" fill="#fcebbc" stroke="#c8862a" stroke-linejoin="round"/></svg>
<div id="t15" class="abs tree" style="left:56.99px;top:359.5px;letter-spacing:0.800px;">obj</div>
<svg class="abs" style="left:24px;top:384px" width="7" height="10" viewBox="0 0 7 10" ><path d="M0.600 0.800 L5 4.700 L0.600 8.600 Z" fill="#fff" stroke="#a6a6a6" stroke-width="1"/></svg>
<svg class="abs" style="left:36.5px;top:379px" width="16" height="16" viewBox="0 0 16 16" ><path d="M0.5 0.5 H7.5 V7.5 H3" fill="#fff" stroke="#5c9c3c" stroke-width="1.100"/><path d="M0.5 0.5 V4.5" stroke="#5c9c3c" stroke-width="1.100" fill="none"/><path d="M2.5 4 H5.5" stroke="#555" stroke-width="1"/><path d="M8.500 7 V5.500 H12.500 V9" fill="none" stroke="#c8862a"/><path d="M1.5 14.500 V7.500 H5.500" fill="none" stroke="#c8862a"/><path d="M1.500 14.500 L4.500 9.500 H15 L11.500 14.500 Z" fill="#fcebbc" stroke="#c8862a" stroke-width="1" stroke-linejoin="round"/></svg>
<div id="t16" class="abs tree" style="left:57.17px;top:377.5px;letter-spacing:0.117px;">res</div>
<svg class="abs" style="left:36.5px;top:398.5px" width="16" height="16" viewBox="0 0 16 16" ><path d="M0.500 10.500 V3 Q0.500 1.500 2 1.500 H5 L6.500 3.500 H11 Q12.500 3.500 12.500 5 V10.500 Q12.500 11.500 11.500 11.500 H1.500 Q0.500 11.500 0.500 10.500Z" fill="#fbe9b4" stroke="#c8862a"/><path d="M1.500 10.500 L5.500 5.500 H11.500" fill="none" stroke="#d9a040" stroke-width="0.800"/><rect x="8.500" y="6.500" width="7" height="8" fill="#fbd978" stroke="#b87a22"/><path d="M12 8v3.200M12 12v1.300" stroke="#222" stroke-width="1.500"/></svg>
<div id="t17" class="abs tree" style="left:56.92px;top:395.5px;letter-spacing:0.370px;">scripting</div>
<svg class="abs" style="left:37.5px;top:415px" width="16" height="16" viewBox="0 0 16 16" ><path d="M0.500 0.500 H8.500 L12.500 4.500 V14.500 H0.500 Z" fill="#eaf4fc" stroke="#9ab0cc"/><path d="M8.500 0.500 V4.500 H12.500 Z" fill="#f8d8a8" stroke="#e0a868" stroke-width="0.800"/><path d="M9.500 5.500 V11.500 M9.500 6.800 Q8.500 5.800 6.500 5.800 Q3.500 5.800 3.500 8.500 Q3.500 11.200 6.500 11.200 Q8.500 11.200 9.500 10.200" fill="none" stroke="#46a436" stroke-width="1.100"/><path d="M0.500 14.500 H12.500" stroke="#7a98c0" stroke-width="1.200"/></svg>
<div id="t18" class="abs tree" style="left:58.03px;top:413.5px;letter-spacing:0.050px;">AndroidManifest.xml</div>
<svg class="abs" style="left:37px;top:433px" width="16" height="16" viewBox="0 0 16 16" ><path d="M1.500 0.500 H8.500 L11.500 3.500 V14.500 H1.500 Z" fill="#fff" stroke="#c8a050"/><rect x="3" y="3" width="3" height="3" fill="#3a5aa8"/></svg>
<div id="t19" class="abs tree" style="left:56.92px;top:431.5px;letter-spacing:0.370px;">ant.properties</div>
<div id="ed" class="abs"><div id="edhead" class="abs"></div><div id="edtab" class="abs"></div></div>
<svg class="abs" style="left:329px;top:68.5px" width="16" height="16" viewBox="0 0 16 16" ><path d="M0.500 14.500 V0.500 H7.500 L11.500 4.500 V8" fill="#eef2fa" stroke="#a89a80"/><path d="M0.500 14.500 H7" stroke="#8c8c8c" fill="none"/><path d="M7.500 0.500 V4.500 H11.500 Z" fill="#f0d8a0" stroke="#c8a050" stroke-width="0.800"/><circle cx="10.500" cy="11" r="4.300" fill="#fff" stroke="#2f9a4a" stroke-width="1.200"/><circle cx="10.500" cy="11" r="2.200" fill="#d8f0dc" stroke="#2f9a4a" stroke-width="1.100"/><circle cx="10.500" cy="11" r="0.800" fill="#2f9a4a"/></svg>
<div id="edtxt" class="abs ss" style="left:348px;top:70px;">Android.mk</div>
<svg class="abs" style="left:414px;top:71px" width="12" height="11" viewBox="0 0 12 11" ><path d="M1.500 0.500h2l2.500 3 2.500-3h2v1.200L7.600 5l2.900 3.800v1.200h-2L6 7 3.500 10h-2V8.800L4.400 5 1.500 1.700z" fill="#fff" stroke="#6e6e6e" stroke-width="1" stroke-linejoin="round"/></svg>
<div class="abs" style="left:1012px;top:70px;width:10px;height:4px;border:1px solid #767676;background:#fff"></div>
<div class="abs" style="left:1035px;top:70px;width:10px;height:10px;border:1px solid #767676;border-top-width:2px;background:#fff"></div>
<div class="abs" style="left:330px;top:90px;width:12px;height:228px;background:#f6f6f6"></div>
<div class="abs" style="left:342px;top:302px;width:9px;height:16px;background:#f5f5f5"></div>
<div class="abs" style="left:350px;top:90px;width:1px;height:212px;background:#f3f3f3"></div>
<div class="abs" style="left:351px;top:255px;width:672px;height:15px;background:#e8f2fe"></div>
<div class="abs" style="left:353px;top:256px;width:2px;height:13px;background:#000"></div>
<div class="abs" style="left:1024px;top:88px;width:15px;height:230px;background:#f0f0f0"></div>
<div class="abs" style="left:1024px;top:176px;width:15px;height:79px;background:#cdcdcd"></div>
<div class="abs" style="left:1039px;top:88px;width:13px;height:230px;background:#f6f6f6"></div>
<svg class="abs" style="left:1027px;top:96px" width="9" height="6" viewBox="0 0 9 6" ><path d="M1 5 L4.500 1.500 L8 5" fill="none" stroke="#505050" stroke-width="1.600"/></svg>
<svg class="abs" style="left:1027px;top:290.5px" width="9" height="6" viewBox="0 0 9 6" ><path d="M1 1 L4.500 4.500 L8 1" fill="none" stroke="#505050" stroke-width="1.600"/></svg>
<div class="abs" style="left:351px;top:302px;width:673px;height:16px;background:#f0f0f0"></div>
<svg class="abs" style="left:357px;top:306px" width="6" height="9" viewBox="0 0 6 9" ><path d="M5 1 L1.500 4.500 L5 8" fill="none" stroke="#a8a8a8" stroke-width="1.500"/></svg>
<svg class="abs" style="left:1012px;top:306px" width="6" height="9" viewBox="0 0 6 9" ><path d="M1 1 L4.500 4.500 L1 8" fill="none" stroke="#c0c0c0" stroke-width="1.500"/></svg>
<!--CODE-->
<div id="c0" class="abs code" style="left:353px;top:91px;"><span class="k">LOCAL_C_INCLUDES</span> := <span class="v">$(LOCAL_PATH)</span>/../../Classes</div>
<div id="c1" class="abs code" style="left:353px;top:121px;"><span class="k">LOCAL_WHOLE_STATIC_LIBRARIES</span> += cocos2dx_static</div>
<div id="c2" class="abs code" style="left:353px;top:136px;"><span class="k">LOCAL_WHOLE_STATIC_LIBRARIES</span> += cocosdenshion_static</div>
<div id="c3" class="abs code" style="left:353px;top:151px;"><span class="k">LOCAL_WHOLE_STATIC_LIBRARIES</span> += box2d_static</div>
<div id="c4" class="abs code" style="left:353px;top:166px;"><span class="k">LOCAL_WHOLE_STATIC_LIBRARIES</span> += chipmunk_static</div>
<div id="c5" class="abs code" style="left:353px;top:181px;"><span class="k">LOCAL_WHOLE_STATIC_LIBRARIES</span> += cocos_extension_static</div>
<div id="c6" class="abs code" style="left:353px;top:211px;"><span class="g">include</span> <span class="v">$(BUILD_SHARED_LIBRARY)</span></div>
<div id="c7" class="abs code" style="left:353px;top:226px;"><span class="p">$(call import-add-path</span>, E:\lenner\cocos2d-x-2.2<span class="p">)</span></div>
<div id="c8" class="abs code" style="left:353px;top:241px;"><span class="p">$(call import-add-path</span>, E:\lenner\cocos2d-x-2.2\cocos2dx\platform\third_party\android\prebuilt<span class="p">)</span></div>
<div id="c9" class="abs code" style="left:353px;top:271px;"><span class="p">$(call import-module</span>,cocos2dx<span class="p">)</span></div>
<div id="c10" class="abs code" style="left:353px;top:286px;"><span class="p">$(call import-module</span>,cocos2dx/platform/third_party/android/prebuilt/libcurl<span class="p">)</span></div>
<div id="ol" class="abs"></div>
<svg class="abs" style="left:1077px;top:68px" width="14" height="15" viewBox="0 0 14 15" ><rect x="0.600" y="0.600" width="5.300" height="5.300" fill="#e4eefc" stroke="#3a7ac8" stroke-width="1.200"/><rect x="0.600" y="8.600" width="5.300" height="5.300" fill="#e4eefc" stroke="#3a7ac8" stroke-width="1.200"/><path d="M7.500 3h5.500M7.500 11.500h5.500M10.500 7.200h2.500" stroke="#3a7ac8" stroke-width="1.300"/><rect x="7.500" y="6" width="2.200" height="2.200" fill="#fff" stroke="#3a7ac8" stroke-width="0.900"/></svg>
<div id="oltxt" class="abs ss" style="left:1094.5px;top:70px;">Outline</div>
<svg class="abs" style="left:1101px;top:92px" width="12" height="14" viewBox="0 0 12 14" ><rect x="0.500" y="0.500" width="11" height="13" fill="#fbfcfe" stroke="#a8b4cc"/><rect x="1" y="1" width="10" height="2.500" fill="#f8d860"/><path d="M2.500 5.500h7M2.500 7.500h7M2.500 9.500h5M2.500 11.500h6" stroke="#5a78c0" stroke-width="0.900"/></svg>
<div id="o0" class="abs tree" style="left:1120.3px;top:89.5px;">LOCAL_C_INCLUDES</div>
<svg class="abs" style="left:1104px;top:110px" width="11" height="10" viewBox="0 0 11 10" ><path d="M0 0 H4.500 V4.500 H0Z M6 0 H10.500 V10 H0.500 V6 H6 Z" fill="#2c6cb4"/></svg>
<div id="o1" class="abs tree" style="left:1120px;top:107.5px;">include</div>
<svg class="abs" style="left:1101px;top:128px" width="12" height="14" viewBox="0 0 12 14" ><rect x="0.500" y="0.500" width="11" height="13" fill="#fbfcfe" stroke="#a8b4cc"/><rect x="1" y="1" width="10" height="2.500" fill="#f8d860"/><path d="M2.500 5.500h7M2.500 7.500h7M2.500 9.500h5M2.500 11.500h6" stroke="#5a78c0" stroke-width="0.900"/></svg>
<div id="o2" class="abs tree" style="left:1120.3px;top:125.5px;">LOCAL_C_INCLUDES</div>
<svg class="abs" style="left:1101px;top:146px" width="12" height="14" viewBox="0 0 12 14" ><rect x="0.500" y="0.500" width="11" height="13" fill="#fbfcfe" stroke="#a8b4cc"/><rect x="1" y="1" width="10" height="2.500" fill="#f8d860"/><path d="M2.500 5.500h7M2.500 7.500h7M2.500 9.500h5M2.500 11.500h6" stroke="#5a78c0" stroke-width="0.900"/></svg>
<div id="o3" class="abs tree" style="left:1120.3px;top:143.5px;">LOCAL_C_INCLUDES</div>
<svg class="abs" style="left:1101px;top:164px" width="12" height="14" viewBox="0 0 12 14" ><rect x="0.500" y="0.500" width="11" height="13" fill="#fbfcfe" stroke="#a8b4cc"/><rect x="1" y="1" width="10" height="2.500" fill="#f8d860"/><path d="M2.500 5.500h7M2.500 7.500h7M2.500 9.500h5M2.500 11.500h6" stroke="#5a78c0" stroke-width="0.900"/></svg>
<div id="o4" class="abs tree" style="left:1120.3px;top:161.5px;">LOCAL_C_INCLUDES</div>
<svg class="abs" style="left:1101px;top:182px" width="12" height="14" viewBox="0 0 12 14" ><rect x="0.500" y="0.500" width="11" height="13" fill="#fbfcfe" stroke="#a8b4cc"/><rect x="1" y="1" width="10" height="2.500" fill="#f8d860"/><path d="M2.500 5.500h7M2.500 7.500h7M2.500 9.500h5M2.500 11.500h6" stroke="#5a78c0" stroke-width="0.900"/></svg>
<div id="o5" class="abs tree" style="left:1120.3px;top:179.5px;">LOCAL_C_INCLUDES</div>
<svg class="abs" style="left:1101px;top:200px" width="12" height="14" viewBox="0 0 12 14" ><rect x="0.500" y="0.500" width="11" height="13" fill="#fbfcfe" stroke="#a8b4cc"/><rect x="1" y="1" width="10" height="2.500" fill="#f8d860"/><path d="M2.500 5.500h7M2.500 7.500h7M2.500 9.500h5M2.500 11.500h6" stroke="#5a78c0" stroke-width="0.900"/></svg>
<div id="o6" class="abs tree" style="left:1120.3px;top:197.5px;">LOCAL_C_INCLUDES</div>
<svg class="abs" style="left:1101px;top:218px" width="12" height="14" viewBox="0 0 12 14" ><rect x="0.500" y="0.500" width="11" height="13" fill="#fbfcfe" stroke="#a8b4cc"/><rect x="1" y="1" width="10" height="2.500" fill="#f8d860"/><path d="M2.500 5.500h7M2.500 7.500h7M2.500 9.500h5M2.500 11.500h6" stroke="#5a78c0" stroke-width="0.900"/></svg>
<div id="o7" class="abs tree" style="left:1120.3px;top:215.5px;">LOCAL_C_INCLUDES</div>
<svg class="abs" style="left:1101px;top:236px" width="12" height="14" viewBox="0 0 12 14" ><rect x="0.500" y="0.500" width="11" height="13" fill="#fbfcfe" stroke="#a8b4cc"/><rect x="1" y="1" width="10" height="2.500" fill="#f8d860"/><path d="M2.500 5.500h7M2.500 7.500h7M2.500 9.500h5M2.500 11.500h6" stroke="#5a78c0" stroke-width="0.900"/></svg>
<div id="o8" class="abs tree" style="left:1120.3px;top:233.5px;">LOCAL_C_INCLUDES</div>
<svg class="abs" style="left:1101px;top:254px" width="12" height="14" viewBox="0 0 12 14" ><rect x="0.500" y="0.500" width="11" height="13" fill="#fbfcfe" stroke="#a8b4cc"/><rect x="1" y="1" width="10" height="2.500" fill="#f8d860"/><path d="M2.500 5.500h7M2.500 7.500h7M2.500 9.500h5M2.500 11.500h6" stroke="#5a78c0" stroke-width="0.900"/></svg>
<div id="o9" class="abs tree" style="left:1120.3px;top:251.5px;">LOCAL_C_INCLUDES</div>
<svg class="abs" style="left:1101px;top:272px" width="12" height="14" viewBox="0 0 12 14" ><rect x="0.500" y="0.500" width="11" height="13" fill="#fbfcfe" stroke="#a8b4cc"/><rect x="1" y="1" width="10" height="2.500" fill="#f8d860"/><path d="M2.500 5.500h7M2.500 7.500h7M2.500 9.500h5M2.500 11.500h6" stroke="#5a78c0" stroke-width="0.900"/></svg>
<div id="o10" class="abs tree" style="left:1120.3px;top:269.5px;">LOCAL_C_INCLUDES</div>
<svg class="abs" style="left:1104px;top:290px" width="11" height="10" viewBox="0 0 11 10" ><path d="M0 0 H4.500 V4.500 H0Z M6 0 H10.500 V10 H0.500 V6 H6 Z" fill="#2c6cb4"/></svg>
<div id="o11" class="abs tree" style="left:1120px;top:287.5px;">include</div>
<div class="abs" style="left:1076px;top:303px;width:60px;height:14px;background:#f0f0f0"></div>
<div class="abs" style="left:1093px;top:303px;width:40px;height:14px;background:#cdcdcd"></div>
<svg class="abs" style="left:1082px;top:305.5px" width="6" height="9" viewBox="0 0 6 9" ><path d="M5 1 L1.500 4.500 L5 8" fill="none" stroke="#404040" stroke-width="1.600"/></svg>
<div class="abs" style="left:1071px;top:317px;width:60px;height:7px;background:#fff"></div>
<div id="con" class="abs"><div id="conhead" class="abs"></div><div id="contab" class="abs"></div></div>
<svg class="abs" style="left:328px;top:339px" width="16" height="16" viewBox="0 0 16 16" ><path d="M3.500 1 H14 Q13 2.500 13.500 5 V12.500 H15 V15 H8 V12.500 H9.500 V6 H3.500Z" fill="#fdfdff" stroke="#98a6c6" stroke-width="0.900"/><circle cx="7" cy="4.500" r="2.600" fill="#e84a48" stroke="#c82828" stroke-width="0.600"/><path d="M3.500 9 L0.500 15 H6.500 Z" fill="#fbd66a" stroke="#c58a22" stroke-width="0.900" stroke-linejoin="round"/><path d="M3.500 10.800v2.200M3.500 13.600v0.800" stroke="#222" stroke-width="1.100"/></svg>
<div id="ct0" class="abs ss" style="left:348px;top:341px;">Problems</div>
<div id="ct1" class="abs ss" style="left:407.5px;top:340.5px;font-size:12px;color:#2a7ac4;letter-spacing:0;font-family:&quot;Liberation Sans&quot;,sans-serif">@</div>
<div id="ct2" class="abs ss" style="left:425px;top:341px;">Javadoc</div>
<svg class="abs" style="left:477px;top:339.5px" width="15" height="16" viewBox="0 0 15 16" ><path d="M0.500 0.500 H7.500 L10.500 3.500 V12.500 H0.500 Z" fill="#fff" stroke="#c8a050"/><path d="M5 3.500 Q3 6.500 5 9.500" fill="none" stroke="#3a6ab8" stroke-width="1.100"/><path d="M6 5h2.500M6 6.500h2.500M6 8h2.500" stroke="#3a6ab8" stroke-width="0.800"/><path d="M14.500 11.500 L10.500 8 V10 H6.500 V13 H10.500 V15 Z" fill="#fbd25a" stroke="#c88a14" stroke-width="0.900" stroke-linejoin="round"/></svg>
<div id="ct3" class="abs ss" style="left:496.5px;top:341px;">Declaration</div>
<svg class="abs" style="left:573px;top:340px" width="14" height="13" viewBox="0 0 14 13" ><rect x="0.800" y="0.800" width="12" height="8.500" rx="1" fill="#e8f0fc" stroke="#3466bc" stroke-width="1.600"/><path d="M3.500 3.500h6M3.500 5.500h4" stroke="#2a4a98" stroke-width="1"/><path d="M5 10 H9 V11.500 H11.500 V12.800 H2.500 V11.500 H5Z" fill="#3466bc"/></svg>
<div id="ct4" class="abs ss" style="left:591px;top:341px;">Console</div>
<svg class="abs" style="left:639.5px;top:342px" width="12" height="11" viewBox="0 0 12 11" ><path d="M1.500 0.500h2l2.500 3 2.500-3h2v1.200L7.600 5l2.900 3.800v1.200h-2L6 7 3.500 10h-2V8.800L4.400 5 1.500 1.700z" fill="#fff" stroke="#6e6e6e" stroke-width="1" stroke-linejoin="round"/></svg>
<svg class="abs" style="left:986px;top:339px" width="13" height="15" viewBox="0 0 13 15" ><path d="M6.500 14 L0.800 8 H4.300 V0.700 H8.700 V8 H12.200 Z" fill="#fcdc80" stroke="#cc8e18" stroke-linejoin="round"/><path d="M5.500 1.800v7" stroke="#fff4cc" stroke-width="1"/></svg>
<svg class="abs" style="left:1008.5px;top:339px" width="13" height="15" viewBox="0 0 13 15" ><path d="M6.500 0.700 L0.800 6.700 H4.300 V14 H8.700 V6.700 H12.200 Z" fill="#fcdc80" stroke="#cc8e18" stroke-linejoin="round"/><path d="M5.500 6v7" stroke="#fff4cc" stroke-width="1"/></svg>
<div class="abs" style="left:1027px;top:335px;width:23px;height:22px;background:#a9c9f6;border:1px solid #5b9bea"></div>
<svg class="abs" style="left:1030px;top:337px" width="18" height="18" viewBox="0 0 18 18" ><g fill="#fde7a4" stroke="#cf9424" stroke-width="1" stroke-linejoin="round"><path d="M1.500 5.500 L6.500 1.500 V4 H13.500 V7 H6.500 V9.500 Z"/><path d="M16.500 12.500 L11.500 8.500 V11 H4.500 V14 H11.500 V16.500 Z"/></g></svg>
<div class="abs" style="left:1052px;top:337px;width:1px;height:18px;background:#6d748c"></div>
<svg class="abs" style="left:1062px;top:339px" width="15" height="15" viewBox="0 0 15 15" ><rect x="1.500" y="0.500" width="9" height="12" fill="#e8f0fa" stroke="#c0b090" stroke-width="0.800"/><rect x="10.500" y="0.500" width="4" height="13" fill="#6c86bc"/><path d="M12.500 2v1.500M12.500 6v1.500M12.500 10.500v1.500" stroke="#fff" stroke-width="1.400"/><rect x="0.500" y="8" width="7" height="6.500" fill="#c8ccd8" stroke="#9098ac" stroke-width="0.800"/><rect x="2.500" y="8.500" width="3" height="2.500" fill="#eef0f6"/></svg>
<svg class="abs" style="left:1085px;top:339px" width="15" height="15" viewBox="0 0 15 15" ><rect x="1.500" y="0.500" width="9" height="12" fill="#e8f0fa" stroke="#c0b090" stroke-width="0.800"/><rect x="10.500" y="0.500" width="4" height="13" fill="#6c86bc"/><path d="M12.500 2v1.500M12.500 6v1.500M12.500 10.500v1.500" stroke="#fff" stroke-width="1.400"/><path d="M2.500 9 V7.500 Q2.500 5.500 4.500 5.500 Q6.500 5.500 6.500 7.500 V9" fill="none" stroke="#b8860b" stroke-width="1.300"/><rect x="0.500" y="9" width="8" height="5.500" rx="1" fill="#f4c430" stroke="#b8860b" stroke-width="0.800"/><rect x="4" y="10.800" width="1.300" height="2" fill="#5a4000"/></svg>
<svg class="abs" style="left:1109px;top:341px" width="13" height="10" viewBox="0 0 13 10" ><path d="M0 1h12M0 4.500h12M0 8h4" stroke="#b4b8d8" stroke-width="1"/></svg>
<div id="cdt" class="abs ui" style="left:329.71px;top:361px;letter-spacing:-0.073px;">CDT Build Console [HellRun]</div>
<div class="abs" style="left:330px;top:376px;width:800px;height:1px;background:#8c8c8c"></div>
<svg class="abs" style="left:0;top:0" width="1127" height="438" viewBox="0 0 1127 438"><polygon points="264.0,299.5 347.3,242.6 347.6,247.3 354.2,232.6 338.2,234.4 342.6,236.1 263.0,298.1" fill="#fb0d0f"/><polygon points="279.2,327.0 371.2,259.6 371.6,264.3 377.8,249.4 361.8,251.7 366.3,253.3 278.0,325.6" fill="#fb0d0f"/><polygon points="273.8,385.5 147.7,317.6 151.7,315.3 134.5,316.0 144.1,330.3 143.6,325.7 273.0,387.1" fill="#fb0d0f"/></svg>
</body></html>
